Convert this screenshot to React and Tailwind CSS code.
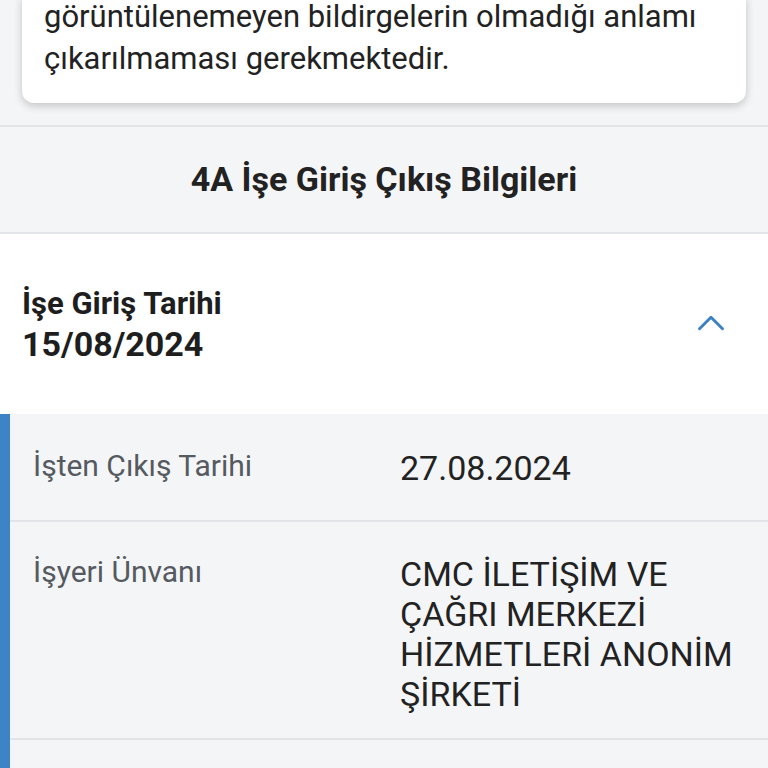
import React from 'react';
import { ChevronUp } from 'lucide-react';

const rows = [
  { label: 'İşten Çıkış Tarihi', value: ['27.08.2024'], pad: 'pt-[34px] pb-[32px]' },
  {
    label: 'İşyeri Ünvanı',
    value: ['CMC İLETİŞİM VE', 'ÇAĞRI MERKEZİ', 'HİZMETLERİ ANONİM', 'ŞİRKETİ'],
    pad: 'pt-[32px] pb-[24px]',
  },
];

const App = () => {
  return (
    <div className="min-h-[768px] bg-[#f4f5f7] font-['Roboto',sans-serif] overflow-hidden">
      {/* Notice card */}
      <div className="px-[22px] mt-[-4px]">
        <div className="bg-white rounded-b-[12px] shadow-[0_3px_8px_rgba(0,0,0,0.2)] px-[22px] pb-[23px]">
          <p className="text-[31px] leading-[42px] text-[#222]">
            görüntülenemeyen bildirgelerin olmadığı anlamı
            <br />
            çıkarılmaması gerekmektedir.
          </p>
        </div>
      </div>

      {/* Section title */}
      <div className="mt-[22px] border-t-2 border-b-2 border-[#e2e4e8] h-[109px] flex items-center justify-center">
        <h2 className="text-[34px] font-bold text-[#222]">4A İşe Giriş Çıkış Bilgileri</h2>
      </div>

      {/* Accordion header */}
      <div className="bg-white h-[180px] flex items-center justify-between pl-[22px] pr-[34px]">
        <div className="text-[#1e1e1e] font-bold">
          <div className="text-[31px] leading-[40px]">İşe Giriş Tarihi</div>
          <div className="text-[34px] leading-[40px]">15/08/2024</div>
        </div>
        <ChevronUp className="w-[46px] h-[46px] mt-[-3px] text-[#3b7fc4]" strokeWidth={1.5} />
      </div>

      {/* Accordion body */}
      <div className="border-l-[10px] border-[#3d84c6] bg-[#f4f5f7]">
        {rows.map((row) => (
          <div key={row.label} className={`flex items-start border-b-2 border-[#e2e4e8] pl-[23px] ${row.pad}`}>
            <div className="w-[367px] text-[30px] leading-[36px] text-[#555a60]">{row.label}</div>
            <div className="text-[34px] leading-[40px] text-[#222]">
              {row.value.map((v) => (
                <div key={v}>{v}</div>
              ))}
            </div>
          </div>
        ))}
        <div className="h-[60px]" />
      </div>
    </div>
  );
};

export default App;
